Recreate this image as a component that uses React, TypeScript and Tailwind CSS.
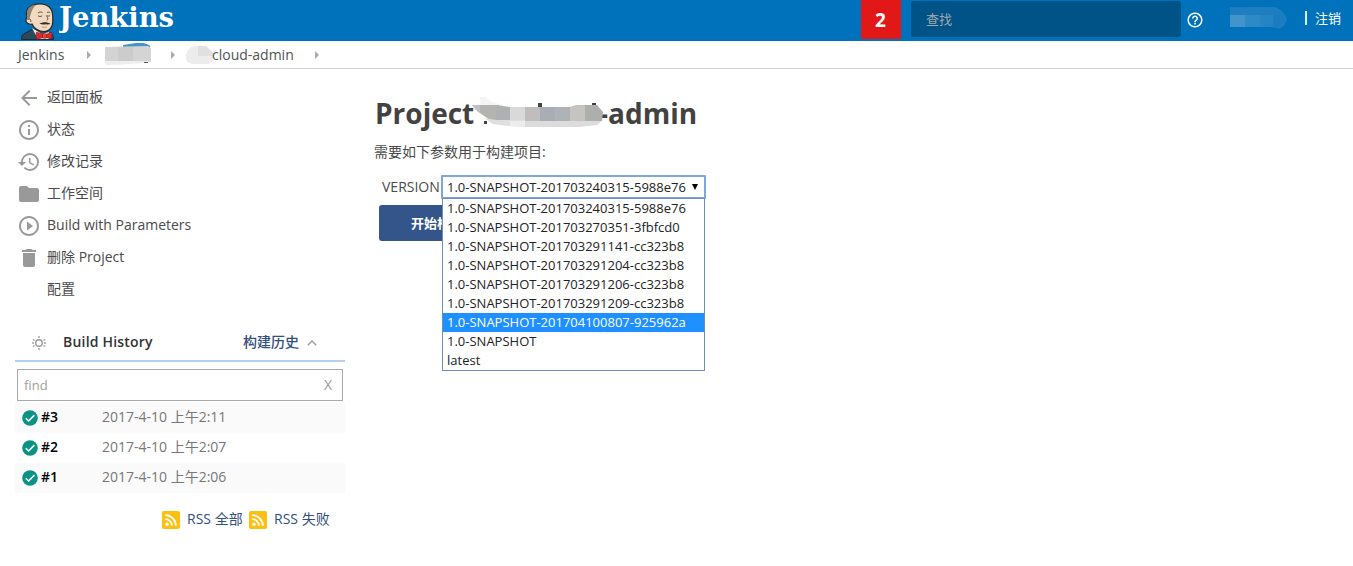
import type { ReactNode } from "react";

const versions = [
  "1.0-SNAPSHOT-201703240315-5988e76",
  "1.0-SNAPSHOT-201703270351-3fbfcd0",
  "1.0-SNAPSHOT-201703291141-cc323b8",
  "1.0-SNAPSHOT-201703291204-cc323b8",
  "1.0-SNAPSHOT-201703291206-cc323b8",
  "1.0-SNAPSHOT-201703291209-cc323b8",
  "1.0-SNAPSHOT-201704100807-925962a",
  "1.0-SNAPSHOT",
  "latest",
];

const builds = [
  { id: "#3", time: "2017-4-10 上午2:11" },
  { id: "#2", time: "2017-4-10 上午2:07" },
  { id: "#1", time: "2017-4-10 上午2:06" },
];

function Glyph({ d }: { d: string }) {
  return (
    <svg viewBox="0 0 24 24" className="size-6 fill-[#999]">
      <path d={d} />
    </svg>
  );
}

const tasks: { label: string; icon: ReactNode }[] = [
  { label: "返回面板", icon: <Glyph d="M20 11H7.83l5.59-5.59L12 4l-8 8 8 8 1.41-1.41L7.83 13H20v-2z" /> },
  {
    label: "状态",
    icon: <Glyph d="M11 17h2v-6h-2v6zm1-15C6.48 2 2 6.48 2 12s4.48 10 10 10 10-4.48 10-10S17.52 2 12 2zm0 18c-4.41 0-8-3.59-8-8s3.59-8 8-8 8 3.59 8 8-3.59 8-8 8zM11 9h2V7h-2v2z" />,
  },
  {
    label: "修改记录",
    icon: <Glyph d="M13 3a9 9 0 0 0-9 9H1l3.89 3.89.07.14L9 12H6c0-3.87 3.13-7 7-7s7 3.13 7 7-3.13 7-7 7c-1.93 0-3.68-.79-4.94-2.06l-1.42 1.42A8.954 8.954 0 0 0 13 21a9 9 0 0 0 0-18zm-1 5v5l4.28 2.54.72-1.21-3.5-2.08V8H12z" />,
  },
  {
    label: "工作空间",
    icon: <Glyph d="M10 4H4c-1.1 0-1.99.9-1.99 2L2 18c0 1.1.9 2 2 2h16c1.1 0 2-.9 2-2V8c0-1.1-.9-2-2-2h-8l-2-2z" />,
  },
  {
    label: "Build with Parameters",
    icon: <Glyph d="M10 16.5l6-4.5-6-4.5v9zM12 2C6.48 2 2 6.48 2 12s4.48 10 10 10 10-4.48 10-10S17.52 2 12 2zm0 18c-4.41 0-8-3.59-8-8s3.59-8 8-8 8 3.59 8 8-3.59 8-8 8z" />,
  },
  {
    label: "删除 Project",
    icon: <Glyph d="M6 19c0 1.1.9 2 2 2h8c1.1 0 2-.9 2-2V7H6v12zM19 4h-3.5l-1-1h-5l-1 1H5v2h14V4z" />,
  },
  { label: "配置", icon: null },
];

function Butler() {
  return (
    <svg viewBox="0 0 34 37" className="ml-[21px] h-[37px] w-[34px] shrink-0">
      <path d="M.5 36.500c0-4 1.500-5.500 4-6.500l7-4 13 2 6 3c1.500 1 2 3 2 5.500z" fill="#2a4a5c" stroke="#172a35" />
      <path d="M11 25l10 6 7-2 .5 7H17z" fill="#f3f1ea" />
      <path d="M6 14C3.500 5 11 .8 19 .8c8 0 12.500 5 12.700 12 .1 3.500.5 7-.7 10-1.500 4-4.500 5.700-8 5.700-5 0-10-3-12-7.500-3.500 1-6.500-1.500-6-4 .1-1 .5-2 1-3z" fill="#f2dac0" stroke="#2d241f" strokeWidth="1.200" />
      <path d="M13 1.800C6.500 4 5 8.500 6.600 13.500l-1 3.500 2.400 0 1.500-5c1-4 2.200-7 5.500-10z" fill="#8f8479" />
      <path d="M8 16c1.500-.5 2 1 1.800 3M17 10c1.500-1.300 3.500-1.200 4.500-.2M26 9.500c1.200-.7 2.500-.4 3.300.3M17 12.800c1.300.9 3 .9 4.200 0M26 12.500c1 .8 2 .8 3 0M25.300 12.500c1.300 2 2.400 4 .4 5" fill="none" stroke="#4f3d31" strokeWidth=".9" />
      <path d="M18.500 20.500c2-.8 4-1.500 6.500-1.300 1.500 0 3 .5 4.500 1.500-1.500.8-3 .9-4.500.5-2.500.8-4.800.4-6.500-.7z" fill="#3a2a22" />
      <path d="M21 23.800c1.700.7 3.300.7 4.800 0" stroke="#b98a70" fill="none" />
      <path d="M15.500 29l6.500 2.500v3L16 36.500c-1-2-1-5-.5-7.500zM25 31.500l5.500-2.500c.8 2 .6 5 0 7L25 34.500z" fill="#e0262d" stroke="#7a1b20" strokeWidth=".6" />
      <rect x="21.500" y="30.700" width="4" height="4.500" rx="1" fill="#ef3d3a" stroke="#7a1b20" strokeWidth=".6" />
    </svg>
  );
}

function Crumb() {
  return (
    <svg viewBox="0 0 4 8" className="mt-px h-2 w-1 shrink-0 fill-[#aaa]">
      <path d="M0 0l4 4-4 4z" />
    </svg>
  );
}

function Check() {
  return (
    <svg viewBox="0 0 16 16" className="size-4 shrink-0">
      <circle cx="8" cy="8" r="7.800" fill="#0b9285" />
      <path d="M3.800 8.200l2.800 2.800 5.800-5.900" fill="none" stroke="#fff" strokeWidth="1.500" />
    </svg>
  );
}

function Rss() {
  return (
    <svg viewBox="0 0 18 18" className="mt-px h-[18px] w-[18px] shrink-0">
      <rect width="18" height="18" rx="1.800" fill="#fdbf12" />
      <circle cx="5" cy="13.200" r="1.700" fill="#fff" />
      <path d="M3.300 8.200a6.600 6.600 0 0 1 6.600 6.600M3.300 4.200a10.600 10.600 0 0 1 10.600 10.600" fill="none" stroke="#fff" strokeWidth="1.800" />
    </svg>
  );
}

function Header() {
  return (
    <header className="flex h-[41px] items-start bg-[#0071bb] text-white">
      <div className="flex w-[861px] shrink-0 items-start pt-[3px]">
        <Butler />
        <svg viewBox="0 0 120 34" className="-mt-[3px] ml-[4px] h-[34px] w-[120px]">
          <text x="0" y="27" textLength="115" lengthAdjust="spacingAndGlyphs" fill="#fff" className="font-['DejaVu_Serif',serif] text-[27px] font-bold">
            Jenkins
          </text>
        </svg>
      </div>
      <div className="flex h-[39px] w-10 shrink-0 items-center justify-center bg-[#e21717] pr-px text-[19px] font-bold">2</div>
      <div className="ml-[10px] mt-px flex h-9 w-[270px] shrink-0 items-center rounded-[3px] bg-[#005387] pl-[15px] text-[13px] text-[#a3a8ac]">查找</div>
      <svg viewBox="0 0 24 24" className="ml-[5px] mt-[11px] h-[18px] w-[18px] shrink-0 fill-white">
        <path d="M11 18h2v-2h-2v2zm1-16C6.480 2 2 6.480 2 12s4.480 10 10 10 10-4.480 10-10S17.520 2 12 2zm0 18c-4.410 0-8-3.590-8-8s3.590-8 8-8 8 3.590 8 8-3.590 8-8 8zm0-14c-2.210 0-4 1.790-4 4h2c0-1.100.9-2 2-2s2 .9 2 2c0 2-3 1.750-3 5h2c0-2.250 3-2.500 3-5 0-2.210-1.790-4-4-4z" />
      </svg>
      <svg viewBox="0 0 58 23" className="ml-[26px] mt-[7px] h-[23px] w-[58px] shrink-0">
        <path d="M0 0h45l7 4v4H0z" fill="#1e7ec0" />
        <path d="M0 8h15v12H0z" fill="#4295cc" />
        <path d="M15 8h15v12H15z" fill="#2d8ac7" />
        <path d="M30 8h15v13l-3-1H30z" fill="#2585c4" />
        <path d="M45 4l8 1 4 7-3 7-5 3-6-2V8z" fill="#1b7dbf" />
      </svg>
      <div className="ml-[17px] mt-[11px] h-[14px] w-[2px] shrink-0 bg-[#d6eefb]" />
      <div className="ml-2 mt-2 shrink-0 text-[13px] leading-5">注销</div>
    </header>
  );
}

function Breadcrumbs() {
  return (
    <nav className="flex h-7 items-center border-b border-[#d3d3cc] pl-[18px] text-[14px] text-[#4f5456]">
      <span className="w-[69px]">Jenkins</span>
      <Crumb />
      <svg viewBox="0 0 50 24" className="ml-3 h-6 w-[50px]">
        <path d="M20 2l13-2c7-1 12 1 14 3v4H20z" fill="#4395c9" />
        <path d="M2 4l43-1 3 2v14H2z" fill="#d4d4d4" />
        <path d="M15 4h15v15H15z" fill="#ccc" />
        <path d="M1 18h46c-4 3-35 4-44 4z" fill="#eee" />
        <path d="M41 19h4v1h-4z" fill="#555" />
      </svg>
      <span className="ml-[18px]">
        <Crumb />
      </span>
      <svg viewBox="0 0 30 22" className="ml-[9px] h-[22px] w-[30px]">
        <path d="M2 13C2 6 6 2 12 2h10l7 7v8l-5 3H10c-5 0-8-2-8-7z" fill="#ececec" />
        <path d="M14 2h8l7 7v3H14z" fill="#e0e0e0" />
      </svg>
      <span className="-ml-[2px] w-[103px]">cloud-admin</span>
      <Crumb />
    </nav>
  );
}

function Sidebar() {
  return (
    <aside className="w-[345px] shrink-0 pt-3">
      <ul>
        {tasks.map((t) => (
          <li key={t.label} className="flex h-8 items-center pl-[17px]">
            <span className="mt-px h-6 w-6">{t.icon}</span>
            <span className="-mt-px ml-[6px]">{t.label}</span>
          </li>
        ))}
      </ul>
      <section className="ml-[15px] mt-4">
        <div className="flex h-[41px] items-center border-b-2 border-[#b3d1ee] pl-[17px] pr-[28px] pt-[3px]">
          <svg viewBox="0 0 14 14" className="mt-px size-[14px] fill-none stroke-[#999]">
            <circle cx="7" cy="7" r="3.300" strokeWidth="1.400" />
            <path d="M7 0v2M7 12v2M.8 3.500l1.700 1M11.500 9.500l1.700 1M.8 10.500l1.700-1M11.500 4.500l1.700-1M1 6v2M13 6v2" strokeWidth="1.300" />
          </svg>
          <span className="ml-[17px] flex-1 font-semibold tracking-[0.2px] text-[#333]">Build History</span>
          <span className="font-medium text-[#334f80]">构建历史</span>
          <svg viewBox="0 0 10 6" className="ml-2 mt-px h-[6px] w-[10px] fill-none stroke-[#999]">
            <path d="M.8 5.200L5 1l4.200 4.200" strokeWidth="1.300" />
          </svg>
        </div>
        <div className="ml-[2px] mt-[7px] flex h-8 w-[326px] items-center justify-between border border-[#a9a9a9] pl-[6px] pr-[10px] text-[13px] text-[#a0a0a0]">
          <span>find</span>
          <span className="text-[14px] text-[#999]">X</span>
        </div>
        <ul className="mt-[2px]">
          {builds.map((b) => (
            <li key={b.id} className="flex h-[30px] items-center pl-[7px] odd:bg-[#fafafa]">
              <Check />
              <span className="-mt-[3px] ml-[3px] w-[61px] font-semibold text-black">{b.id}</span>
              <span className="-mt-[3px] text-[#777]">{b.time}</span>
            </li>
          ))}
        </ul>
      </section>
      <div className="mt-4 flex h-5 items-center pl-[162px] text-[#334f80]">
        <Rss />
        <span className="-mt-px ml-[7px] w-[62px] whitespace-nowrap">RSS 全部</span>
        <Rss />
        <span className="-mt-px ml-[7px] whitespace-nowrap">RSS 失败</span>
      </div>
    </aside>
  );
}

function Main() {
  return (
    <main className="flex-1 pl-[30px] pt-[26px]">
      <h1 className="flex h-9 items-center text-[28px] font-bold text-[#424242]">
        <span className="w-[97px]">Project</span>
        <svg viewBox="0 0 134 36" className="z-10 mt-px h-9 w-[134px] shrink-0">
          <path d="M12 25h3v3h-3zM66 7h4v5h-4zM120 7h4v5h-4z" fill="#424242" />
          <path d="M8 1l5 0 7 5 12 3-12 4H9z" fill="#f4f4f4" />
          <path d="M0 9h27v15h-9L5 15z" fill="#b3b3b0" />
          <path d="M0 9h8v8l-5-4z" fill="#bfc3c6" />
          <path d="M24 9l14 2v13H24z" fill="#aeb0b2" />
          <path d="M38 11h15v14H38z" fill="#d9d9d9" />
          <path d="M53 11h15v14H53z" fill="#c0bebc" />
          <path d="M68 11h15v14H68z" fill="#a9adb6" />
          <path d="M83 11h15v14H83z" fill="#b0b3b6" />
          <path d="M98 11l6-2h10v16H98z" fill="#c5c4c1" />
          <path d="M113 9h12l6 7-1 9h-17z" fill="#adafad" />
          <path d="M12 22l12 2h29v7l-17-1-15-2z" fill="#dfdfdf" />
          <path d="M38 25h15v6l-15-1z" fill="#ededed" />
          <path d="M53 25h77l-5 4-18 2H53z" fill="#dcdcdc" />
        </svg>
        <span className="-ml-[7px]">-admin</span>
      </h1>
      <p className="-ml-px mt-[11px] h-5 leading-5">需要如下参数用于构建项目:</p>
      <div className="mt-[13px] flex items-start">
        <label className="ml-[6px] mt-[2px] w-[61px] pl-px leading-5">VERSION</label>
        <div className="relative w-[264px] text-[13px] text-[#222]">
          <div className="-ml-px flex h-6 items-center justify-between rounded-[1px] border-2 border-[#7fa5da] bg-white pl-1 pr-[6px]">
            <span>{versions[0]}</span>
            <svg viewBox="0 0 6 6" className="h-[6px] w-[6px] fill-black">
              <path d="M0 0h6L3 6z" />
            </svg>
          </div>
          <ul className="absolute left-0 top-[23px] z-10 w-[263px] border border-[#6b8fc0] bg-white">
            {versions.map((v, i) => (
              <li key={v} className={i === 6 ? "h-[19px] bg-[#1e90ff] pl-1 leading-[19px] text-white" : "h-[19px] pl-1 leading-[19px]"}>
                {v}
              </li>
            ))}
          </ul>
        </div>
      </div>
      <button className="ml-[4px] mt-[6px] flex h-9 w-[116px] items-center justify-center rounded-[3px] bg-[#345589] text-[13px] font-bold text-white">
        开始构建
      </button>
    </main>
  );
}

export default function App() {
  return (
    <div className="h-[566px] w-[1353px] overflow-hidden bg-white font-['Open_Sans','Noto_Sans_CJK_SC',sans-serif] text-[14px] leading-5 text-[#4a4a4a]">
      <Header />
      <Breadcrumbs />
      <div className="flex">
        <Sidebar />
        <Main />
      </div>
    </div>
  );
}
